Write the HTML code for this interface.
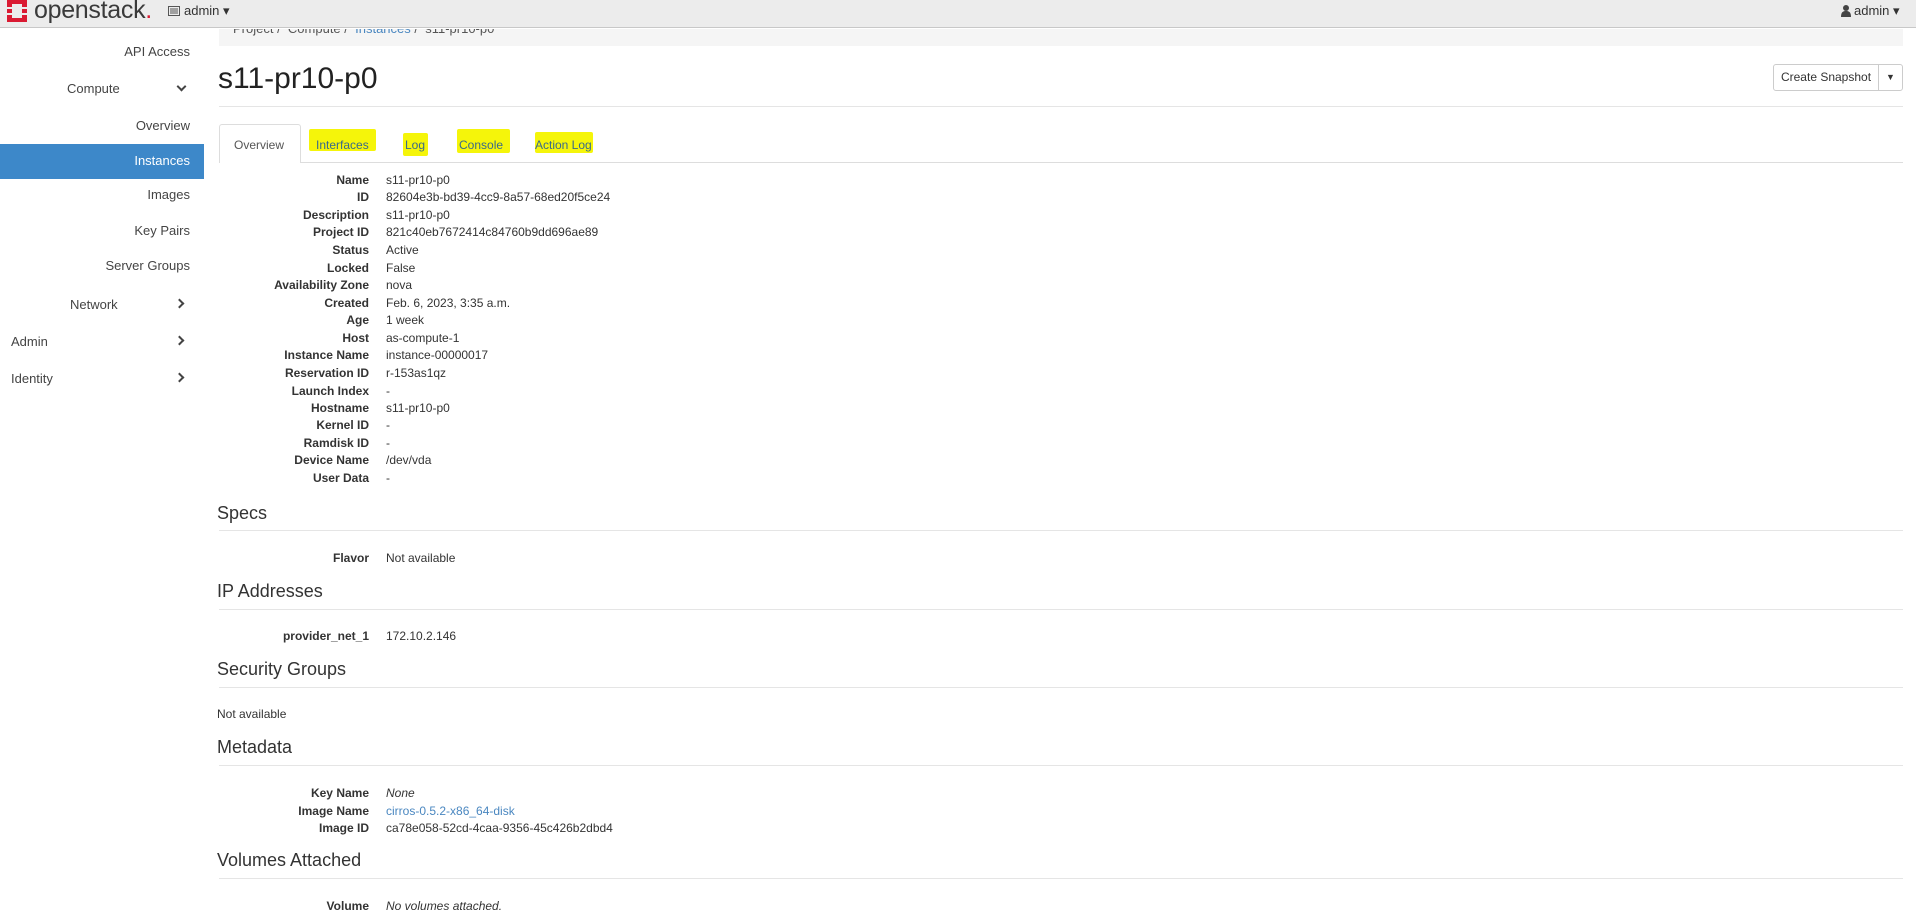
<!DOCTYPE html>
<html><head><meta charset="utf-8"><style>
*{margin:0;padding:0;box-sizing:border-box}
body{width:1916px;height:908px;overflow:hidden;background:#fff;font-family:"Liberation Sans",Arial,sans-serif;color:#333;position:relative}
.a{position:absolute;white-space:nowrap}
#top{position:absolute;left:0;top:0;width:1916px;height:28px;background:#ececec;border-bottom:1px solid #c8c8c8}
.side{position:absolute;font-size:13px;color:#444}
.hl{position:absolute;background:#f5f50a;border-radius:2px}
.tab{position:absolute;font-size:12px;color:#3a6a8a;top:138px}
.lab{position:absolute;right:1547px;font-size:12px;font-weight:bold;color:#333;text-align:right}
.val{position:absolute;left:386px;font-size:12px;color:#333}
.h{position:absolute;left:217px;font-size:18px;color:#333}
.hr{position:absolute;left:219px;width:1684px;height:1px;background:#e5e5e5}
.chev{position:absolute;width:7px;height:7px;border-right:2px solid #444;border-bottom:2px solid #444}
</style></head><body>
<div id="top">
  <svg class="a" style="left:5px;top:0" width="24" height="22" viewBox="0 0 24 22"><path d="M2 0h20v7h-5V4H7v3H2z M2 9h5v4H2z M17 9h5v4h-5z M2 15h5v3h10v-3h5v7H2z" fill="#da1a32"/></svg>
  <div class="a" style="left:34px;top:-4px;font-size:25px;color:#3a3a3a;letter-spacing:-0.3px">openstack<span style="color:#da1a32">.</span></div>
  <svg class="a" style="left:168px;top:6px" width="12" height="10"><rect x="0.5" y="0.5" width="11" height="9" fill="none" stroke="#555"/><path d="M2 3h8M2 5h8M2 7h8" stroke="#555"/></svg>
  <div class="a" style="left:184px;top:3px;font-size:13px;color:#333">admin ▾</div>
  <svg class="a" style="left:1841px;top:5px" width="10" height="12"><circle cx="5" cy="3" r="3" fill="#444"/><path d="M0 12c0-5 2-6 5-6s5 1 5 6z" fill="#444"/></svg>
  <div class="a" style="left:1854px;top:3px;font-size:13px;color:#333">admin ▾</div>
</div>
<div class="a" style="left:219px;top:29px;width:1684px;height:17px;background:#f5f5f5;overflow:hidden">
  <div class="a" style="left:14px;top:-8px;font-size:13px;color:#555">Project / &nbsp;Compute / &nbsp;<span style="color:#4a87c0">Instances</span> / &nbsp;s11-pr10-p0</div>
</div>
<div class="side" style="right:1726px;top:44px">API Access</div>
<div class="side" style="left:67px;top:81px">Compute</div>
<div class="chev" style="left:178px;top:83px;transform:rotate(45deg)"></div>
<div class="side" style="right:1726px;top:118px">Overview</div>
<div class="a" style="left:0;top:144px;width:204px;height:35px;background:#3d88c9"></div>
<div class="side" style="right:1726px;top:153px;color:#fff">Instances</div>
<div class="side" style="right:1726px;top:187px">Images</div>
<div class="side" style="right:1726px;top:223px">Key Pairs</div>
<div class="side" style="right:1726px;top:258px">Server Groups</div>
<div class="side" style="left:70px;top:297px">Network</div>
<div class="chev" style="left:176px;top:300px;transform:rotate(-45deg)"></div>
<div class="side" style="left:11px;top:334px">Admin</div>
<div class="chev" style="left:176px;top:337px;transform:rotate(-45deg)"></div>
<div class="side" style="left:11px;top:371px">Identity</div>
<div class="chev" style="left:176px;top:374px;transform:rotate(-45deg)"></div>

<div class="a" style="left:218px;top:62px;font-size:30px;color:#222">s11-pr10-p0</div>
<div class="a" style="left:1773px;top:64px;width:106px;height:27px;border:1px solid #ccc;border-radius:3px 0 0 3px;font-size:12px;text-align:center;line-height:25px">Create Snapshot</div>
<div class="a" style="left:1878px;top:64px;width:25px;height:27px;border:1px solid #ccc;border-radius:0 3px 3px 0;font-size:9px;text-align:center;line-height:25px">▼</div>
<div class="hr" style="top:106px"></div>

<div class="a" style="left:219px;top:162px;width:1684px;height:1px;background:#ddd"></div>
<div class="a" style="left:219px;top:124px;width:82px;height:39px;border:1px solid #ddd;border-bottom:none;background:#fff;border-radius:3px 3px 0 0"></div>
<div class="tab" style="left:234px;color:#555">Overview</div>
<div class="hl" style="left:309px;top:129px;width:67px;height:22px"></div>
<div class="tab" style="left:316px">Interfaces</div>
<div class="hl" style="left:403px;top:133px;width:25px;height:23px"></div>
<div class="tab" style="left:405px">Log</div>
<div class="hl" style="left:457px;top:129px;width:53px;height:24px"></div>
<div class="tab" style="left:459px">Console</div>
<div class="hl" style="left:535px;top:132px;width:58px;height:21px"></div>
<div class="tab" style="left:535px">Action Log</div>

<div class="lab" style="top:173px">Name</div><div class="val" style="top:173px">s11-pr10-p0</div>
<div class="lab" style="top:190px">ID</div><div class="val" style="top:190px">82604e3b-bd39-4cc9-8a57-68ed20f5ce24</div>
<div class="lab" style="top:208px">Description</div><div class="val" style="top:208px">s11-pr10-p0</div>
<div class="lab" style="top:225px">Project ID</div><div class="val" style="top:225px">821c40eb7672414c84760b9dd696ae89</div>
<div class="lab" style="top:243px">Status</div><div class="val" style="top:243px">Active</div>
<div class="lab" style="top:261px">Locked</div><div class="val" style="top:261px">False</div>
<div class="lab" style="top:278px">Availability Zone</div><div class="val" style="top:278px">nova</div>
<div class="lab" style="top:296px">Created</div><div class="val" style="top:296px">Feb. 6, 2023, 3:35 a.m.</div>
<div class="lab" style="top:313px">Age</div><div class="val" style="top:313px">1 week</div>
<div class="lab" style="top:331px">Host</div><div class="val" style="top:331px">as-compute-1</div>
<div class="lab" style="top:348px">Instance Name</div><div class="val" style="top:348px">instance-00000017</div>
<div class="lab" style="top:366px">Reservation ID</div><div class="val" style="top:366px">r-153as1qz</div>
<div class="lab" style="top:384px">Launch Index</div><div class="val" style="top:384px">-</div>
<div class="lab" style="top:401px">Hostname</div><div class="val" style="top:401px">s11-pr10-p0</div>
<div class="lab" style="top:418px">Kernel ID</div><div class="val" style="top:418px">-</div>
<div class="lab" style="top:436px">Ramdisk ID</div><div class="val" style="top:436px">-</div>
<div class="lab" style="top:453px">Device Name</div><div class="val" style="top:453px">/dev/vda</div>
<div class="lab" style="top:471px">User Data</div><div class="val" style="top:471px">-</div>

<div class="h" style="top:503px">Specs</div><div class="hr" style="top:530px"></div>
<div class="lab" style="top:551px">Flavor</div><div class="val" style="top:551px">Not available</div>
<div class="h" style="top:581px">IP Addresses</div><div class="hr" style="top:609px"></div>
<div class="lab" style="top:629px">provider_net_1</div><div class="val" style="top:629px">172.10.2.146</div>
<div class="h" style="top:659px">Security Groups</div><div class="hr" style="top:687px"></div>
<div class="val" style="top:707px;left:217px">Not available</div>
<div class="h" style="top:737px">Metadata</div><div class="hr" style="top:765px"></div>
<div class="lab" style="top:786px">Key Name</div><div class="val" style="top:786px;font-style:italic">None</div>
<div class="lab" style="top:804px">Image Name</div><div class="val" style="top:804px;color:#4a87c0">cirros-0.5.2-x86_64-disk</div>
<div class="lab" style="top:821px">Image ID</div><div class="val" style="top:821px">ca78e058-52cd-4caa-9356-45c426b2dbd4</div>
<div class="h" style="top:850px">Volumes Attached</div><div class="hr" style="top:878px"></div>
<div class="lab" style="top:899px">Volume</div><div class="val" style="top:899px;font-style:italic">No volumes attached.</div>
</body></html>
